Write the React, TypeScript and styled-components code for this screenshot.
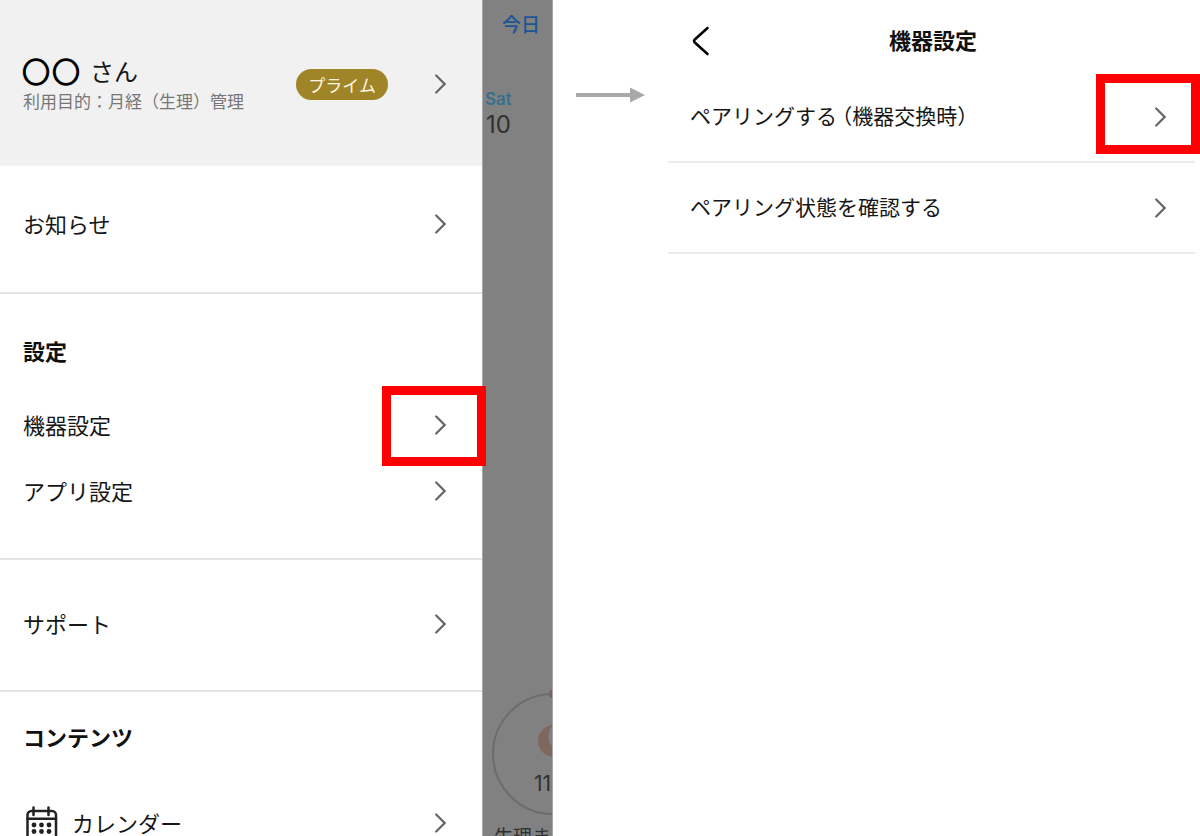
import React from "react";
import styled, { createGlobalStyle } from "styled-components";

const GlobalStyle = createGlobalStyle`
  *, *::before, *::after { box-sizing: border-box; }
  body {
    margin: 0;
    background: #fff;
    color: #161616;
    font-family: "Noto Sans CJK JP", "Noto Sans", sans-serif;
  }
  h1, h2, p, ul { margin: 0; padding: 0; }
  ul { list-style: none; }
  a { color: inherit; text-decoration: none; }
`;

const Stage = styled.div`
  display: grid;
  grid-template-columns: minmax(0, 482fr) minmax(0, 71fr) minmax(0, 115fr) minmax(0, 532fr);
  height: 100vh;
  overflow: hidden;
`;

/* Drawer menu */

const Drawer = styled.nav`
  position: relative;
  z-index: 1;
  background: #fff;
`;

const Profile = styled.a`
  display: flex;
  align-items: center;
  height: 166px;
  padding: 2px 36px 0 23px;
  background: #f1f1f1;
`;

const ProfileText = styled.div`
  flex: 1;
`;

const Name = styled.p`
  display: flex;
  align-items: center;
  gap: 4px;
  font-size: 24px;
  line-height: 32px;
`;

const NameMask = styled.span`
  font-size: 26px;
  color: #000;
  -webkit-text-stroke: 2px #000;
`;

const NameSuffix = styled.span`
  padding-left: 7px;
`;

const Purpose = styled.p`
  padding-top: 2px;
  font-size: 17px;
  line-height: 24px;
  color: #777;
`;

const Badge = styled.span`
  margin-right: 46px;
  padding: 0 12px;
  border-radius: 16px;
  background: #a08428;
  color: #fff6e2;
  font-size: 17px;
  line-height: 31px;
`;

const Section = styled.section<{ $top: number; $bottom: number }>`
  padding-top: ${(p) => p.$top}px;
  padding-bottom: ${(p) => p.$bottom}px;
  border-bottom: 2px solid #e4e4e4;
`;

const SectionTitle = styled.h2<{ $gap: number }>`
  padding-left: 23px;
  margin-bottom: ${(p) => p.$gap}px;
  font-size: 22px;
  font-weight: 700;
  line-height: 32px;
  color: #111;
`;

const MenuLink = styled.a`
  position: relative;
  display: flex;
  align-items: center;
  justify-content: space-between;
  height: 66px;
  padding: 0 36px 0 23px;
  font-size: 22px;
  line-height: 32px;
`;

const MenuLabel = styled.span`
  display: flex;
  align-items: center;
  gap: 13px;
`;

const LabelText = styled.span`
  padding-bottom: 3px;
`;

const Highlight = styled.span<{ $top: number; $right: number }>`
  position: absolute;
  top: ${(p) => p.$top}px;
  right: ${(p) => p.$right}px;
  width: 104px;
  height: 80px;
  border: 9px solid #f00;
`;

/* Dimmed calendar screen behind the drawer */

const Backdrop = styled.aside`
  overflow: hidden;
  background: #818181;
  border: solid #a6a6a6;
  border-width: 0 1px;
  font-family: Inter, "Noto Sans CJK JP", sans-serif;
  color: #303030;
  white-space: nowrap;
`;

const Today = styled.p`
  padding: 12px 0 0 19px;
  font-size: 19px;
  font-weight: 500;
  line-height: 28px;
  color: #1b5596;
`;

const Weekday = styled.p`
  padding: 47px 0 0 2px;
  font-size: 17px;
  font-weight: 500;
  line-height: 24px;
  color: #2f6f92;
`;

const DayNumber = styled.p`
  padding-left: 3px;
  font-size: 24px;
  line-height: 28px;
`;

const Ring = styled.div`
  position: relative;
  width: 122px;
  height: 122px;
  margin: 554px 0 0 9px;
  border: 2px solid #6c6c6c;
  border-radius: 50%;
`;

const RingMarker = styled.span`
  position: absolute;
  top: -6px;
  left: 55px;
  width: 10px;
  height: 10px;
  border-radius: 50%;
  background: #80605a;
`;

const Moon = styled.svg`
  display: block;
  margin: 30px 0 0 44px;
`;

const RingCount = styled.p`
  padding: 13px 0 0 40px;
  font-size: 21px;
  line-height: 28px;
`;

const Countdown = styled.p`
  padding: 9px 0 0 11px;
  font-size: 19px;
  line-height: 28px;
`;

/* Arrow between screens */

const Step = styled.div`
  display: flex;
  justify-content: center;
  padding-top: 87px;
`;

/* Device settings screen */

const Screen = styled.main`
  padding-right: 5px;
`;

const ScreenHeader = styled.header`
  display: grid;
  grid-template-columns: 1fr auto 1fr;
  align-items: center;
  height: 72px;
  padding: 10px 0 0 22px;
  margin-right: 19px;
`;

const BackButton = styled.button`
  display: flex;
  justify-self: start;
  padding: 0;
  border: 0;
  background: none;
  cursor: pointer;
`;

const ScreenTitle = styled.h1`
  padding-bottom: 4px;
  font-size: 22px;
  font-weight: 700;
  line-height: 32px;
  color: #111;
`;

const SettingLink = styled.a`
  position: relative;
  display: flex;
  align-items: center;
  justify-content: space-between;
  height: 91px;
  padding: 0 29px 0 22px;
  border-bottom: 2px solid #ececec;
  font-size: 21px;
  line-height: 32px;
  font-feature-settings: "halt";
`;

const Chevron = () => (
  <svg width="12" height="20" viewBox="0 0 12 20" fill="none" stroke="#666" strokeWidth="2.2" strokeLinecap="round" aria-hidden="true">
    <path d="M2.200 1.500 10.600 10 2.200 18.500" />
  </svg>
);

const CalendarIcon = () => (
  <svg width="36" height="36" viewBox="0 0 36 36" fill="none" stroke="#222" strokeWidth="2.500" aria-hidden="true">
    <rect x="4.500" y="6" width="28.500" height="28.500" rx="4" />
    <path d="M4.500 13.800h28.500M10.500 2.500v7.500M25.500 2.500v7.500" strokeLinecap="round" />
    <g fill="#222" stroke="none">
      {[20, 26.5].map((y) => [11, 18.5, 26].map((x) => <circle key={`${x}-${y}`} cx={x} cy={y} r="2.400" />))}
    </g>
  </svg>
);

const MenuItem = ({ label, icon, marked }: { label: string; icon?: React.ReactNode; marked?: boolean }) => (
  <MenuLink href="#">
    <MenuLabel>
      {icon}
      <LabelText>{label}</LabelText>
    </MenuLabel>
    <Chevron />
    {marked && <Highlight $top={-6} $right={-4} aria-hidden="true" />}
  </MenuLink>
);

export default function App() {
  return (
    <>
      <GlobalStyle />
      <Stage>
        <Drawer>
          <Profile href="#">
            <ProfileText>
              <Name>
                <NameMask>◯</NameMask>
                <NameMask>◯</NameMask>
                <NameSuffix>さん</NameSuffix>
              </Name>
              <Purpose>利用目的：月経（生理）管理</Purpose>
            </ProfileText>
            <Badge>プライム</Badge>
            <Chevron />
          </Profile>
          <Section $top={25} $bottom={35}>
            <MenuItem label="お知らせ" />
          </Section>
          <Section $top={40} $bottom={34}>
            <SectionTitle $gap={26}>設定</SectionTitle>
            <MenuItem label="機器設定" marked />
            <MenuItem label="アプリ設定" />
          </Section>
          <Section $top={31} $bottom={33}>
            <MenuItem label="サポート" />
          </Section>
          <Section $top={28} $bottom={34}>
            <SectionTitle $gap={38}>コンテンツ</SectionTitle>
            <MenuItem label="カレンダー" icon={<CalendarIcon />} />
          </Section>
        </Drawer>

        <Backdrop>
          <Today>今日</Today>
          <Weekday>Sat</Weekday>
          <DayNumber>10</DayNumber>
          <Ring>
            <RingMarker />
            <Moon width="32" height="32" viewBox="0 0 32 32" aria-hidden="true">
              <path d="M16 0A16 16 0 1 0 32 16 11 11 0 0 1 11 9Q11 3 16 0Z" fill="#80675e" />
            </Moon>
            <RingCount>11</RingCount>
          </Ring>
          <Countdown>生理ま</Countdown>
        </Backdrop>

        <Step>
          <svg width="70" height="16" viewBox="0 0 70 16" fill="#a9a9a9" aria-hidden="true">
            <path d="M0 6h54V.5L69 8 54 15.5V10H0Z" />
          </svg>
        </Step>

        <Screen>
          <ScreenHeader>
            <BackButton type="button" aria-label="戻る">
              <svg width="20" height="30" viewBox="0 0 20 30" fill="none" stroke="#000" strokeWidth="2.6" strokeLinecap="round" strokeLinejoin="round" aria-hidden="true">
                <path d="M17.500 2 4.500 13.800Q3.500 15 4.500 16.200L17.500 28" />
              </svg>
            </BackButton>
            <ScreenTitle>機器設定</ScreenTitle>
          </ScreenHeader>
          <ul>
            <li>
              <SettingLink href="#">
                <LabelText>ペアリングする （機器交換時）</LabelText>
                <Chevron />
                <Highlight $top={2} $right={-5} aria-hidden="true" />
              </SettingLink>
            </li>
            <li>
              <SettingLink href="#">
                <LabelText>ペアリング状態を確認する</LabelText>
                <Chevron />
              </SettingLink>
            </li>
          </ul>
        </Screen>
      </Stage>
    </>
  );
}
